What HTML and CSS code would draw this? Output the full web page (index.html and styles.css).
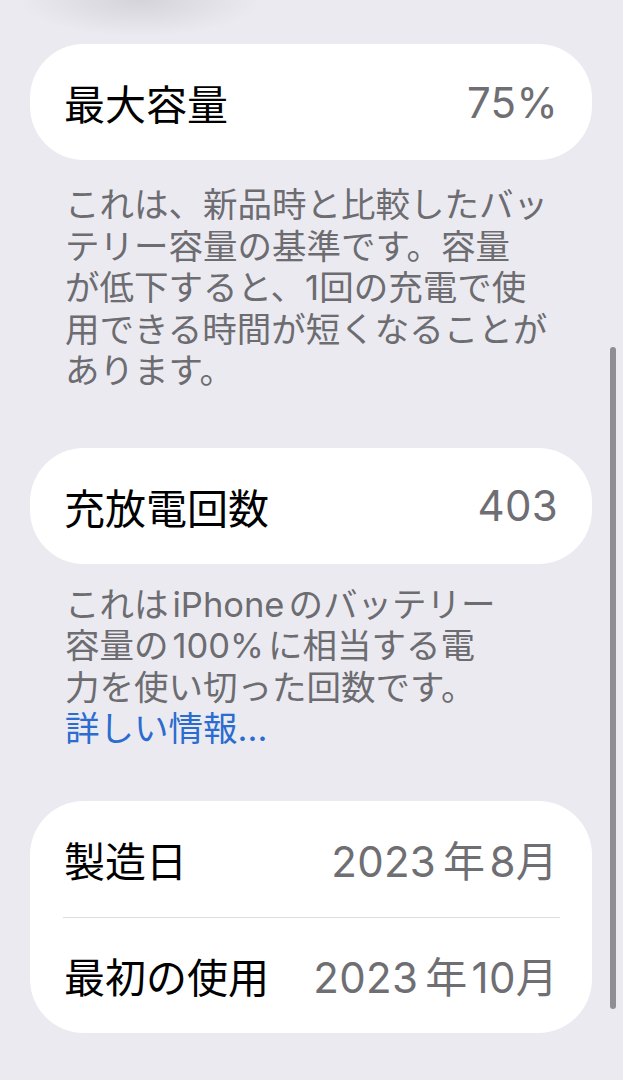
FILE: index.html
```html
<!DOCTYPE html>
<html lang="ja">

<head>
    <meta name="viewport" content="width=device-width, initial-scale=1">
    <meta charset="utf-8">
    <title>バッテリーの状態</title>
    <link rel="stylesheet" href="styles.css">
</head>

<body>
    <main class="settings">
        <section class="group first">
            <div class="card">
                <div class="row">
                    <span class="label">最大容量</span>
                    <span class="value">75%</span>
                </div>
            </div>
            <p class="footnote">これは、新品時と比較したバッ<br>テリー容量の基準です。容量<br>が低下すると、1回の充電で使<br>用できる時間が短くなることが<br>あります。</p>
        </section>

        <section class="group second">
            <div class="card">
                <div class="row">
                    <span class="label">充放電回数</span>
                    <span class="value">403</span>
                </div>
            </div>
            <p class="footnote">これは<span class="latin">iPhone</span>のバッテリー<br>容量の<span class="latin">100%</span>に相当する電<br>力を使い切った回数です。<br><a href="#" class="more">詳しい情報...</a></p>
        </section>

        <section class="group">
            <div class="card">
                <div class="row">
                    <span class="label">製造日</span>
                    <span class="value">2023<span class="unit">年</span>8月</span>
                </div>
                <div class="row">
                    <span class="label">最初の使用</span>
                    <span class="value">2023<span class="unit">年</span>10月</span>
                </div>
            </div>
        </section>
    </main>
    <div class="scroll-thumb"></div>
</body>

</html>
```

FILE: styles.css
```css
html,
body {
    margin: 0;
    height: 100%;
}

body {
    background-color: #ebeaf0;
    background-image: radial-gradient(ellipse 120px 36px at 140px 0, rgba(120, 120, 128, 0.2), rgba(120, 120, 128, 0) 100%);
    background-repeat: no-repeat;
    font-family: "Inter", "Noto Sans CJK JP", sans-serif;
    overflow: hidden;
    position: relative;
}

.settings {
    padding: 44px 31px 0 30px;
}

.card {
    background: #fff;
    border-radius: 54px;
}

.row {
    height: 116px;
    display: flex;
    align-items: center;
    justify-content: space-between;
    padding: 0 34px 0 34px;
    position: relative;
}

.row + .row::before {
    content: "";
    position: absolute;
    top: 0;
    left: 33px;
    right: 32px;
    border-top: 1px solid #dedde2;
}

.label {
    font-size: 41px;
    color: #000;
    font-weight: 400;
}

.value {
    font-size: 42px;
    color: #6e6e73;
    font-weight: 400;
    letter-spacing: 0.3px;
}

.value .unit {
    margin: 0 4px 0 7px;
}

.footnote {
    margin: 0;
    padding: 24px 35px 0 35px;
    font-size: 34.5px;
    line-height: 41.5px;
    color: #6c6c71;
    white-space: nowrap;
}

.footnote .latin {
    margin: 0 4px;
}

.group.first {
    margin-bottom: 56px;
}

.group.second {
    margin-bottom: 51px;
}

.group.second .footnote {
    padding-top: 20px;
}

.more {
    color: #2a6ccf;
    text-decoration: none;
}

.scroll-thumb {
    position: absolute;
    left: 610px;
    top: 347px;
    width: 6px;
    height: 662px;
    border-radius: 3px;
    background: #8f8e94;
}
```
